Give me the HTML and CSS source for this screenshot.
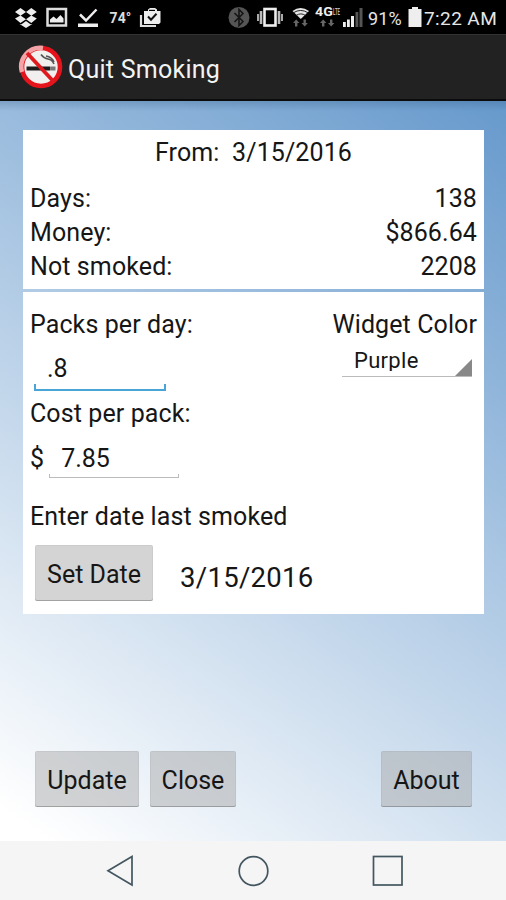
FILE: index.html
```html
<!DOCTYPE html>
<html lang="en">
<head>
    <meta charset="UTF-8">
    <meta name="viewport" content="width=device-width, initial-scale=1.0">
    <title>Quit Smoking</title>
    <link rel="stylesheet" href="styles.css">
</head>
<body>

<div class="status-bar">
    <svg class="status-left" width="180" height="34" viewBox="0 0 180 34">
        <!-- dropbox -->
        <g fill="#eee">
            <path d="M15 12l5.500-4 5.500 4-5.500 3.700zM26 12l5.300-4 5.500 4-5.500 3.700zM15 18.600l5.500-3 5.500 3.600-5.500 3.700zM26 19.200l5.300-3.600 5.500 3-5.500 4.300zM19.500 24l2 .3 4.500-3.300 4.500 3.300 2-.3-6.500 4z"/>
        </g>
        <!-- picture -->
        <rect x="47.500" y="9" width="18.500" height="16.500" fill="none" stroke="#ddd" stroke-width="2.500"/>
        <path d="M50 22.500v-3l3.500-3 3 2.500 4-4 3 3.500v4z" fill="#eee"/>
        <!-- download done -->
        <path d="M80 14.500l6 6 10.500-11" fill="none" stroke="#eee" stroke-width="2.500"/>
        <rect x="78" y="23.500" width="20" height="3.500" fill="#eee"/>
        <text class="temp" x="109.500" y="23">74°</text>
        <!-- clipboard -->
        <path d="M141 15v11h15" fill="none" stroke="#ddd" stroke-width="2.200"/>
        <path d="M144 11h4V9.500L150 8h5l2 1.500V11h3.500v11.500L159 24h-15z" fill="#eee"/>
        <path d="M149 11v-1.200h6V11z" fill="#000"/>
        <path d="M148 16.500l3 3.200 5.500-6" fill="none" stroke="#111" stroke-width="2"/>
    </svg>
    <svg class="status-right" width="146" height="34" viewBox="226 0 146 34">
        <!-- bluetooth -->
        <circle cx="239" cy="17.500" r="10.500" fill="#555"/>
        <path d="M234.500 13l8.500 8.500-4 4V9.500l4 4-8.500 8.500" fill="none" stroke="#161616" stroke-width="1.600"/>
        <!-- vibrate -->
        <rect x="264.500" y="9" width="11" height="16.500" fill="none" stroke="#eee" stroke-width="2.600"/>
        <path d="M261 11v13M279 11v13" stroke="#bbb" stroke-width="2.600"/>
        <path d="M258 14v7M282 14v7" stroke="#aaa" stroke-width="2"/>
        <!-- wifi -->
        <path d="M292.500 11q8-6 16.500 0l-8.200 8z" fill="#e6e6e6"/>
        <path d="M293.500 12.700q7-4.500 14.500 0M296 15.500q5-3.200 9.500 0" fill="none" stroke="#222" stroke-width="1"/>
        <g class="arrows" fill="#666">
            <path d="M293 23l3.200-3.500 3.200 3.500h-2v3.500h-2.400V23zM301.500 23h2v-3.500h2.400V23h2l-3.200 3.500z"/>
            <path d="M320 23l3.200-3.500 3.200 3.500h-2v3.500H322V23zM328 23h2v-3.500h2.400V23h2l-3.200 3.500z"/>
        </g>
        <text class="network" x="315" y="16" textLength="18" lengthAdjust="spacingAndGlyphs">4G</text>
        <text class="network-lte" x="333" y="15" textLength="7" lengthAdjust="spacingAndGlyphs">LTE</text>
        <!-- signal -->
        <path d="M343 22h2.800v5H343zM347 19.500h2.800V27H347zM351 16h3v11h-3z" fill="#eee"/>
        <path d="M355.500 12h2.800v15h-2.800zM359.500 8h3v19h-3z" fill="#555"/>
    </svg>
    <span class="percent">91%</span>
    <svg class="battery" width="14" height="20" viewBox="0 0 14 20">
        <path d="M4 0h6v2h3.500v18H.5V2H4z" fill="#eee"/>
    </svg>
    <span class="clock">7:22 AM</span>
</div>

<header class="title-bar">
    <svg width="46" height="46" viewBox="0 0 46 46">
        <circle cx="23" cy="23" r="19" fill="#f2f0ee" stroke="#e5141c" stroke-width="4.600"/>
        <path d="M4 28A19 19 0 0 1 25 4" fill="none" stroke="#f5a3a6" stroke-width="4.600"/>
        <path d="M8.500 24.500h24" stroke="#1c1c1c" stroke-width="4"/>
        <path d="M33 24.500h4.500" stroke="#777" stroke-width="4"/>
        <path d="M23 10.500q3 4 7 4.500t6 5M28 12q6 1 8 6" fill="none" stroke="#555" stroke-width="1.600"/>
        <path d="M9 9l27 29" stroke="#e0191f" stroke-width="3.800"/>
    </svg>
    <h1>Quit Smoking</h1>
</header>

<main class="content">
    <section class="card summary">
        <p class="from">From:&nbsp; 3/15/2016</p>
        <p class="row"><span>Days:</span><span>138</span></p>
        <p class="row"><span>Money:</span><span>$866.64</span></p>
        <p class="row"><span>Not smoked:</span><span>2208</span></p>
    </section>

    <section class="card settings">
        <div class="row">
            <label for="packs">Packs per day:</label>
            <span>Widget Color</span>
        </div>
        <div class="row fields">
            <input class="field focused" type="text" id="packs" value=".8">
            <div class="spinner">
                <span class="spinner-text">Purple</span>
                <svg width="17" height="17" viewBox="0 0 17 17"><path d="M17 0v17H0z" fill="#888"/></svg>
            </div>
        </div>
        <label class="cost-label" for="cost">Cost per pack:</label>
        <div class="cost">
            <span>$</span>
            <input class="field" type="text" id="cost" value="7.85">
        </div>
        <p class="date-label">Enter date last smoked</p>
        <div class="date">
            <button class="btn set-date">Set Date</button>
            <span class="date-value">3/15/2016</span>
        </div>
    </section>

    <div class="actions">
        <button class="btn update">Update</button>
        <button class="btn close">Close</button>
        <button class="btn about">About</button>
    </div>
</main>

<nav class="nav-bar">
    <svg width="506" height="59" viewBox="0 0 506 59">
        <g fill="none" stroke="#43565f" stroke-width="1.700">
            <path d="M132 15.500v28.500L108 29.800z"/>
            <circle cx="253.500" cy="30" r="14.300"/>
            <rect x="373.500" y="15.500" width="28.500" height="28.500"/>
        </g>
    </svg>
</nav>

</body>
</html>
```

FILE: styles.css
```css
* {
    box-sizing: border-box;
}
body {
    margin: 0;
    height: 900px;
    display: flex;
    flex-direction: column;
    overflow: hidden;
    font-family: Roboto, "Liberation Sans", sans-serif;
    font-size: 25px;
    line-height: 34px;
    letter-spacing: 0.1px;
    color: #161616;
}
p, h1 {
    margin: 0;
}
svg {
    display: block;
    flex: none;
}
.status-bar {
    height: 34px;
    flex: none;
    display: flex;
    align-items: center;
    background: #000;
    color: #e6e6e6;
    font-size: 19px;
    white-space: nowrap;
}
.status-right {
    margin-left: 46px;
}
.percent {
    width: 36px;
    margin-left: -4px;
    padding-top: 3px;
    font-size: 18px;
}
.battery {
    margin-left: 4px;
}
.clock {
    margin-left: 2px;
    padding-top: 3px;
    letter-spacing: 0.4px;
}
.temp {
    font-size: 14px;
    font-weight: bold;
    fill: #ddd;
}
.network {
    font-size: 12px;
    font-weight: bold;
    fill: #eee;
}
.network-lte {
    font-size: 9px;
    font-weight: bold;
    fill: #bbb;
}
.title-bar {
    height: 67px;
    flex: none;
    display: flex;
    align-items: center;
    padding-left: 18px;
    background: #222;
    border-top: 1px solid #333;
    border-bottom: 2px solid #0c0c0c;
    color: #f3f3f3;
}
.title-bar h1 {
    margin: 6px 0 0 4px;
    font-size: 25px;
    font-weight: normal;
    letter-spacing: 0.25px;
}
.content {
    height: 740px;
    flex: none;
    display: flex;
    flex-direction: column;
    padding: 28.5px 22px 0 23px;
    background: linear-gradient(rgba(40, 80, 120, 0.25), transparent 10px),
        linear-gradient(34.4deg, #fff 3%, #6699cc);
}
.card {
    background: #fff;
    padding: 0 7px;
}
.summary {
    height: 159.5px;
    padding-top: 6px;
    margin-bottom: 2.5px;
}
.from {
    margin-bottom: 12.5px;
    text-align: center;
}
.row {
    display: flex;
    justify-content: space-between;
}
.settings {
    height: 322.5px;
    padding-top: 16px;
}
.fields {
    height: 55px;
    align-items: flex-start;
}
.field {
    width: 130px;
    height: 36px;
    padding: 0 0 2px 11px;
    border: solid #bbb;
    border-width: 0 1px 1px;
    border-image: linear-gradient(transparent 88%, #bbb 88%) 1;
    background: none;
    font: inherit;
    color: inherit;
    outline: none;
}
.field.focused {
    width: 132px;
    height: 42px;
    margin: 7px 0 0 4px;
    padding: 0 0 1px 11px;
    border-width: 0 2px 2px;
    border-image: linear-gradient(transparent 85%, #48a5d6 85%) 2;
}
.spinner {
    width: 130px;
    height: 35px;
    display: flex;
    justify-content: space-between;
    align-items: flex-end;
    margin-right: 5px;
    padding-left: 12px;
    border-bottom: 1px solid #bbb;
}
.spinner-text {
    height: 27px;
    margin-bottom: 5px;
    overflow: hidden;
    font-size: 22px;
    letter-spacing: 0.3px;
}
.cost-label {
    display: block;
}
.cost {
    display: flex;
    align-items: flex-start;
    height: 69px;
    padding-top: 11px;
}
.cost .field {
    margin-left: 5px;
}
.date-label {
    margin-bottom: 11.5px;
}
.date {
    display: flex;
    padding-left: 5px;
}
.date-value {
    margin: 16px 0 0 27px;
    font-size: 27.5px;
    letter-spacing: 0.3px;
}
.btn {
    height: 56px;
    padding: 3px 0 0;
    border: 0;
    border-radius: 2px;
    background: rgba(170, 170, 170, 0.5);
    box-shadow: inset 0 -1px rgba(0, 0, 0, 0.2), inset 0 0 0 1px rgba(0, 0, 0, 0.04);
    font: inherit;
    font-size: 25px;
    color: #161616;
}
.set-date {
    width: 118px;
}
.actions {
    display: flex;
    margin-top: 137px;
    padding: 0 12px;
}
.update {
    width: 104px;
    margin-right: 11px;
}
.close {
    width: 86px;
}
.about {
    width: 91px;
    margin-left: auto;
}
.nav-bar {
    height: 59px;
    flex: none;
    background: #f5f5f5;
}
```
